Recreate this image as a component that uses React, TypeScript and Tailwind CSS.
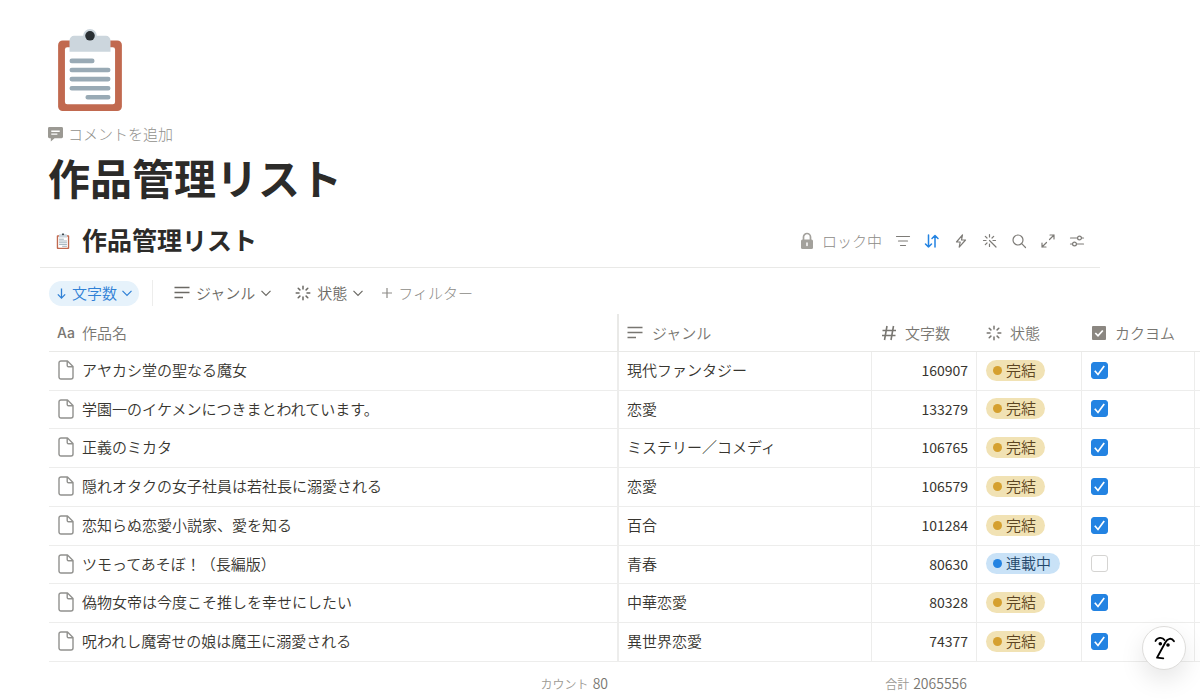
import React from "react";

type Work = { title: string; genre: string; count: number; status: "完結" | "連載中"; kakuyomu: boolean };

const works: Work[] = [
  { title: "アヤカシ堂の聖なる魔女", genre: "現代ファンタジー", count: 160907, status: "完結", kakuyomu: true },
  { title: "学園一のイケメンにつきまとわれています。", genre: "恋愛", count: 133279, status: "完結", kakuyomu: true },
  { title: "正義のミカタ", genre: "ミステリー／コメディ", count: 106765, status: "完結", kakuyomu: true },
  { title: "隠れオタクの女子社員は若社長に溺愛される", genre: "恋愛", count: 106579, status: "完結", kakuyomu: true },
  { title: "恋知らぬ恋愛小説家、愛を知る", genre: "百合", count: 101284, status: "完結", kakuyomu: true },
  { title: "ツモってあそぼ！（長編版）", genre: "青春", count: 80630, status: "連載中", kakuyomu: false },
  { title: "偽物女帝は今度こそ推しを幸せにしたい", genre: "中華恋愛", count: 80328, status: "完結", kakuyomu: true },
  { title: "呪われし魔寄せの娘は魔王に溺愛される", genre: "異世界恋愛", count: 74377, status: "完結", kakuyomu: true },
];

function Clipboard({ className }: { className: string }) {
  return (
    <svg viewBox="0 0 36 36" className={className} aria-hidden="true">
      <path fill="#C1694F" d="M32 34a2 2 0 0 1-2 2H6a2 2 0 0 1-2-2V7a2 2 0 0 1 2-2h24a2 2 0 0 1 2 2z" />
      <path fill="#FFF" d="M29 32a1 1 0 0 1-1 1H8a1 1 0 0 1-1-1V9a1 1 0 0 1 1-1h20a1 1 0 0 1 1 1z" />
      <path fill="#CCD6DD" d="M25 3h-4a3 3 0 1 0-6 0h-4a2 2 0 0 0-2 2v5h18V5a2 2 0 0 0-2-2z" />
      <circle fill="#292F33" cx="18" cy="3" r="2.1" />
      <path
        stroke="#99AAB5"
        strokeWidth="2"
        strokeLinecap="round"
        d="M10 14h9M10 18h16M10 22h16M10 26h16M17 30h9"
      />
    </svg>
  );
}

function Lines() {
  return (
    <svg viewBox="0 0 16 16" className="size-4 shrink-0" fill="none" stroke="currentColor" strokeWidth="1.6" aria-hidden="true">
      <path d="M.5 2.500h15M.5 7.500h15M.5 12.500h8.500" />
    </svg>
  );
}

function Burst() {
  return (
    <svg viewBox="0 0 16 16" className="size-4 shrink-0" fill="none" stroke="currentColor" strokeWidth="1.500" strokeLinecap="round" aria-hidden="true">
      <path d="M8 1.200v2.800M8 12v2.800M1.200 8H4M12 8h2.800M3.200 3.200l1.700 1.700M11.100 11.100l1.700 1.700M12.800 3.200l-1.700 1.700M4.900 11.100l-1.700 1.700" />
    </svg>
  );
}

function Chevron() {
  return (
    <svg viewBox="0 0 10 10" className="size-[10px] shrink-0" fill="none" stroke="currentColor" strokeWidth="1.200" aria-hidden="true">
      <path d="M.5 2.800 5 7.300l4.500-4.500" />
    </svg>
  );
}

function FileIcon() {
  return (
    <svg viewBox="0 0 16 20" className="h-5 w-4 shrink-0 text-[#91918e]" fill="none" stroke="currentColor" strokeWidth="1.400" strokeLinejoin="round" aria-hidden="true">
      <path d="M3 1h6.500L15 6.500V17a2 2 0 0 1-2 2H3a2 2 0 0 1-2-2V3a2 2 0 0 1 2-2zM9.200 1.200V5.500a1.300 1.300 0 0 0 1.300 1.300H14.800" />
    </svg>
  );
}

function ToolButton({ label, active, children }: { label: string; active?: boolean; children: React.ReactNode }) {
  return (
    <button type="button" aria-label={label} className={active ? "text-[#2383e2]" : "text-[#7d7b77]"}>
      <svg viewBox="0 0 16 16" className="size-4" fill="none" stroke="currentColor" strokeWidth="1.200" strokeLinecap="round" strokeLinejoin="round" aria-hidden="true">
        {children}
      </svg>
    </button>
  );
}

function Status({ value }: { value: Work["status"] }) {
  const done = value === "完結";
  return (
    <span
      className={
        "inline-flex h-[21px] items-center gap-1 rounded-full pl-[7px] pr-[9px] leading-none " +
        (done ? "bg-[#f1e2b4] text-[#5c4420]" : "bg-[#c9e2f7] text-[#24476b]")
      }
    >
      <span className={"size-[9px] rounded-full " + (done ? "bg-[#d5a02f]" : "bg-[#2383e2]")} />
      <span className="pb-0.5">{value}</span>
    </span>
  );
}

function Check({ label, checked }: { label: string; checked: boolean }) {
  return (
    <span className="grid size-[17px]">
      <input
        type="checkbox"
        aria-label={label}
        defaultChecked={checked}
        className="peer col-start-1 row-start-1 size-[17px] appearance-none rounded-[3px] border border-[#d5d4d2] bg-white checked:border-[#2383e2] checked:bg-[#2383e2]"
      />
      <svg viewBox="0 0 17 17" className="pointer-events-none invisible col-start-1 row-start-1 size-[17px] peer-checked:visible" fill="none" stroke="white" strokeWidth="1.700" aria-hidden="true">
        <path d="m3.800 8.800 3.200 3.700 6.200-8.500" />
      </svg>
    </span>
  );
}

export default function App() {
  return (
    <main className="overflow-x-hidden bg-white pt-[29px] font-['Noto_Sans_CJK_JP',sans-serif] text-[15px] font-[350] leading-5 text-[#37352f]">
      <header className="pl-12">
        <Clipboard className="ml-px size-[82px]" />
        <button type="button" className="mt-[13px] flex items-center gap-[5px] font-light text-[#91908c]">
          <svg viewBox="0 0 16 16" className="size-[15px]" aria-hidden="true">
            <path fill="#9b9993" d="M1.500 0h13A1.500 1.500 0 0 1 16 1.500v9a1.500 1.500 0 0 1-1.500 1.500H7l-4 3.500V12H1.500A1.500 1.500 0 0 1 0 10.500v-9A1.500 1.500 0 0 1 1.500 0z" />
            <path stroke="white" strokeWidth="1.400" d="M3.500 4.500h9M3.500 7.500h6.500" />
          </svg>
          コメントを追加
        </button>
        <h1 className="mt-[5px] text-[42px] font-bold leading-[56px] text-[#2c2b29]">作品管理リスト</h1>
      </header>

      <div className="ml-10 mr-[100px] mt-2 flex h-[55px] items-center justify-between border-b border-[#e9e9e7] pl-[15px] pr-[15px] pt-0.5">
        <h2 className="flex items-center gap-[11px] text-[25px] font-bold leading-8 text-[#2c2b29]">
          <Clipboard className="size-4" />
          <span className="pb-1">作品管理リスト</span>
        </h2>
        <div className="flex items-center gap-[13px]">
          <button type="button" className="flex items-center gap-2 font-light text-[#8d8b87]">
            <svg viewBox="0 0 14 18" className="h-[18px] w-[14px]" aria-hidden="true">
              <path fill="none" stroke="#a3a19c" strokeWidth="1.700" d="M3.500 8V5a3.500 3.500 0 0 1 7 0v3" />
              <rect x="1" y="7.500" width="12" height="9.500" rx="1.500" fill="#a3a19c" />
              <path stroke="white" strokeWidth="1.500" strokeLinecap="round" d="M7 11v2.500" />
            </svg>
            ロック中
          </button>
          <ToolButton label="フィルター">
            <path d="M1.500 3.500h13M3.500 8h9M5.500 12.500h5" />
          </ToolButton>
          <ToolButton label="並べ替え" active>
            <path strokeWidth="1.500" d="M4.500 2v12M1.500 11l3 3 3-3M11 14V2.500M8 5.500l3-3 3 3" />
          </ToolButton>
          <ToolButton label="オートメーション">
            <path d="M9.500 1.800 3.500 9h3.700L6.200 14.200 12.500 7H8.500z" />
          </ToolButton>
          <ToolButton label="AI">
            <path d="M7.500 7.500 14 14M7.500 1.500v2.500M7.500 11v2.500M1.500 7.500H4M11 7.500h2.500M3.300 3.300l1.700 1.700M11.700 3.300 10 5M3.300 11.700 5 10" />
          </ToolButton>
          <ToolButton label="検索">
            <circle cx="7" cy="7" r="5" />
            <path d="m10.700 10.700 3.800 3.800" />
          </ToolButton>
          <ToolButton label="全画面">
            <path d="M9.500 6.500 14 2M10 2h4v4M6.500 9.500 2 14M6 14H2v-4" />
          </ToolButton>
          <ToolButton label="設定">
            <path d="M1.500 5h7M12.500 5h2M1.500 11h2M7.500 11h7" />
            <circle cx="10.500" cy="5" r="1.900" />
            <circle cx="5.500" cy="11" r="1.900" />
          </ToolButton>
        </div>
      </div>

      <div className="ml-[49px] mt-3 flex h-[26px] items-center text-[#6b6964]">
        <button type="button" className="flex h-[25px] items-center gap-[5px] rounded-full bg-[#e6f2fb] px-[7px] text-[#2f80d6]">
          <svg viewBox="0 0 12 12" className="size-[11px]" fill="none" stroke="currentColor" strokeWidth="1.400" aria-hidden="true">
            <path d="M6 .5V11M2 7l4 4 4-4" />
          </svg>
          文字数
          <Chevron />
        </button>
        <span className="ml-[13px] h-full w-px bg-[#ededec]" />
        <button type="button" className="ml-[21px] flex items-center gap-[6px]">
          <Lines />
          ジャンル
          <Chevron />
        </button>
        <button type="button" className="ml-6 flex items-center gap-[6px]">
          <Burst />
          状態
          <Chevron />
        </button>
        <button type="button" className="ml-[19px] flex items-center gap-[6px] font-light text-[#8d8b87]">
          <svg viewBox="0 0 10 10" className="size-[10px]" stroke="currentColor" strokeWidth="1.200" aria-hidden="true">
            <path d="M5 0v10M0 5h10" />
          </svg>
          フィルター
        </button>
      </div>

      <div className="ml-[49px] mt-2">
        <table className="w-full table-fixed border-separate border-spacing-0">
          <colgroup>
            <col />
            <col className="w-[253px]" />
            <col className="w-[105px]" />
            <col className="w-[105px]" />
            <col className="w-[113px]" />
            <col className="w-[5px]" />
          </colgroup>
          <thead>
            <tr className="h-[38px] text-left text-[#787671] *:border-b *:border-[#e9e9e7] *:p-0 *:font-[350]">
              <th className="border-r-2">
                <span className="flex items-center gap-[7px] pl-2">
                  <span className="font-['Inter',sans-serif] text-sm font-medium">Aa</span>
                  作品名
                </span>
              </th>
              <th>
                <span className="flex items-center gap-[9px] pl-2">
                  <Lines />
                  ジャンル
                </span>
              </th>
              <th>
                <span className="flex items-center gap-2 pl-[9px]">
                  <svg viewBox="0 0 16 16" className="size-4" fill="none" stroke="currentColor" strokeWidth="1.600" aria-hidden="true">
                    <path d="M6 1 3.500 15M12.500 1 10 15M1.500 5.500h13.500M1 10.500h13.500" />
                  </svg>
                  文字数
                </span>
              </th>
              <th>
                <span className="flex items-center gap-2 pl-[9px]">
                  <Burst />
                  状態
                </span>
              </th>
              <th>
                <span className="flex items-center gap-[9px] pl-[10px]">
                  <svg viewBox="0 0 14 14" className="size-[14px]" aria-hidden="true">
                    <rect width="14" height="14" rx="1" fill="#8b8781" />
                    <path d="m3.300 7 2.700 2.800 4.800-5.300" fill="none" stroke="white" strokeWidth="1.800" />
                  </svg>
                  カクヨム
                </span>
              </th>
              <th aria-hidden="true" />
            </tr>
          </thead>
          <tbody>
            {works.map((w) => (
              <tr key={w.title} className="h-[39px] *:border-b *:border-[#ededec] *:px-0 *:pt-0 *:pb-0.5 [&:nth-child(4n+2)]:h-[38px]">
                <td className="border-r-2 border-r-[#e3e2e0]">
                  <a href="#" className="flex items-center gap-2 pl-[9px]">
                    <FileIcon />
                    {w.title}
                  </a>
                </td>
                <td className="border-r">
                  <span className="pl-2">{w.genre}</span>
                </td>
                <td className="border-r text-right text-sm font-normal">
                  <span className="pr-2">{w.count}</span>
                </td>
                <td className="border-r">
                  <span className="flex pl-[9px]">
                    <Status value={w.status} />
                  </span>
                </td>
                <td className="border-r">
                  <span className="flex pl-[9px]">
                    <Check label={w.title} checked={w.kakuyomu} />
                  </span>
                </td>
                <td />
              </tr>
            ))}
          </tbody>
          <tfoot>
            <tr className="h-[38px] text-right text-sm text-[#787671] *:px-0 *:pt-1 *:pb-0">
              <td>
                <span className="pr-[11px]">
                  <span className="mr-1 text-xs text-[#9b9993]">カウント</span>80
                </span>
              </td>
              <td />
              <td>
                <span className="whitespace-nowrap pr-[10px]">
                  <span className="mr-1 text-xs text-[#9b9993]">合計</span>2065556
                </span>
              </td>
              <td colSpan={3} />
            </tr>
          </tfoot>
        </table>
      </div>

      <button type="button" aria-label="アシスタント" className="fixed bottom-[30px] right-[14px] grid size-11 place-items-center rounded-full border border-[#dddcda] bg-white shadow-[0_10px_24px_rgba(0,0,0,0.1)]">
        <svg viewBox="0 0 24 26" className="h-[26px] w-6" fill="none" stroke="black" strokeWidth="1.800" strokeLinecap="round" strokeLinejoin="round" aria-hidden="true">
          <path d="M3.500 6C5 2.200 10.500 1.700 12.500 5M22 6.300C19.500 2.300 15.500 3.300 13.300 7.500L5 22.700l6.300.7" />
          <circle cx="8.300" cy="8.700" r="0.900" fill="black" />
          <circle cx="16" cy="10" r="0.900" fill="black" />
        </svg>
      </button>
    </main>
  );
}
